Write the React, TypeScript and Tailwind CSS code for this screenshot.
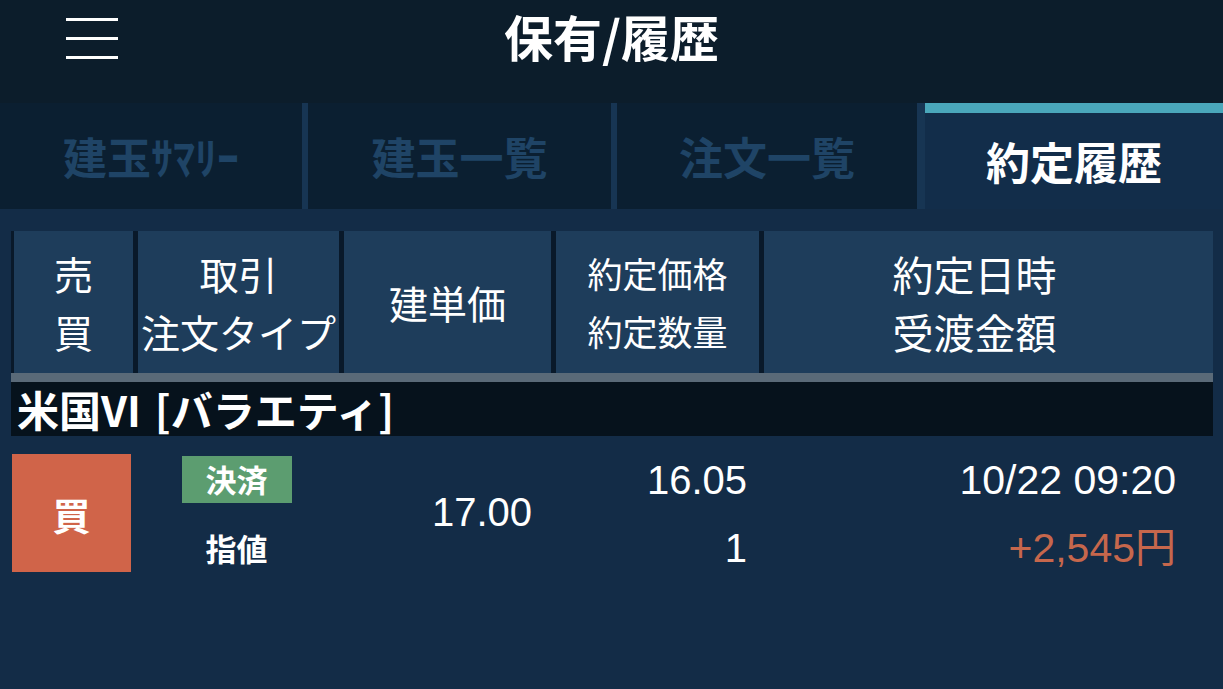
import React from 'react';

const jp = "font-['Noto_Sans_CJK_JP',sans-serif]";
const num = "font-['Liberation_Sans','Noto_Sans_CJK_JP',sans-serif]";

const tabs = [
  { label: '建玉ｻﾏﾘｰ', w: 'w-[302px]', gap: 'w-[6px]' },
  { label: '建玉一覧', w: 'w-[303px]', gap: 'w-[6px]' },
  { label: '注文一覧', w: 'w-[300px]', gap: 'w-[8px]' },
];

const Header = () => (
  <div className="flex h-[103px] items-start bg-[#0c1d2b] pt-[17px]">
    <div className="flex w-[185px] pl-[66px] pt-[1px]">
      <div className="flex w-[52px] flex-col gap-[16px]">
        <span className="h-[3px] w-full bg-white" />
        <span className="h-[3px] w-full bg-white" />
        <span className="h-[3px] w-full bg-white" />
      </div>
    </div>
    <h1 className={`-mt-[4px] flex-1 text-center text-[49px] font-bold leading-[46px] text-white ${jp}`}>保有/履歴</h1>
    <div className="w-[185px]" />
  </div>
);

const Tabs = () => (
  <div className="flex h-[106px] bg-[#173553]">
    {tabs.map((t, i) => (
      <React.Fragment key={i}>
        <div className={`${t.w} flex items-center justify-center bg-[#0b1f31]`}>
          <span className={`text-[44px] font-bold text-[#1f4466] ${jp}`}>{t.label}</span>
        </div>
        <div className={t.gap} />
      </React.Fragment>
    ))}
    <div className="flex flex-1 flex-col bg-[#122d4a]">
      <div className="h-[10px] bg-[#4aa7bb]" />
      <div className="flex flex-1 items-center justify-center">
        <span className={`text-[44px] font-bold text-white ${jp}`}>約定履歴</span>
      </div>
    </div>
  </div>
);

const HeadCell = ({ w, lines, size = 'text-[39px]' }: { w: string; lines: string[]; size?: string }) => (
  <div className={`${w} flex flex-col items-center justify-center bg-[#1e3d5b] text-white ${size} leading-[58px] ${jp}`}>
    {lines.map((l) => (
      <span key={l}>{l}</span>
    ))}
  </div>
);

export default function App() {
  return (
    <div className="h-[689px] w-[1223px] overflow-hidden bg-[#132c47]">
      <Header />
      <Tabs />

      <div className="pl-[11px] pr-[10px] pt-[22px]">
        {/* column headings */}
        <div className="flex h-[142px] gap-[5px] bg-[#09192a] pl-[3px]">
          <HeadCell w="w-[119px]" lines={['売', '買']} />
          <HeadCell w="w-[201px]" lines={['取引', '注文タイプ']} />
          <HeadCell w="w-[207px]" lines={['建単価']} />
          <HeadCell w="w-[203px]" lines={['約定価格', '約定数量']} size="text-[35px]" />
          <HeadCell w="flex-1 pr-[28px]" lines={['約定日時', '受渡金額']} size="text-[41px]" />
        </div>
        <div className="h-[9px] bg-[#5a6a78]" />

        {/* group */}
        <div className="flex h-[54px] items-center bg-[#06121c] pl-[6px]">
          <span className={`text-[42px] font-bold leading-none text-white ${jp}`}>
            米国VI<span className="ml-[14px]">[バラエティ]</span>
          </span>
        </div>

        {/* execution row */}
        <div className="flex pt-[18px] text-white">
          <div className="w-[123px] pl-[1px]">
            <div className={`flex h-[118px] w-[119px] items-center justify-center bg-[#d06449] text-[38px] font-bold ${jp}`}>買</div>
          </div>
          <div className="flex w-[205px] flex-col items-center pt-[2px]">
            <div className={`flex h-[47px] w-[110px] items-center justify-center bg-[#5c9d70] text-[31px] font-bold ${jp}`}>決済</div>
            <div className={`mt-[25px] text-[31px] font-bold leading-[40px] ${jp}`}>指値</div>
          </div>
          <div className={`flex w-[212px] items-center justify-end pr-[19px] text-[40px] ${num}`}>
            <span className="-mt-[4px]">17.00</span>
          </div>
          <div className={`flex w-[208px] flex-col items-end gap-[16px] pr-[12px] text-[40px] leading-[52px] ${num}`}>
            <span>16.05</span>
            <span>1</span>
          </div>
          <div className={`flex flex-1 flex-col items-end gap-[16px] pr-[37px] text-[41px] leading-[52px] ${num}`}>
            <span>10/22 09:20</span>
            <span className="text-[#c6674c]">+2,545円</span>
          </div>
        </div>
      </div>
    </div>
  );
}
